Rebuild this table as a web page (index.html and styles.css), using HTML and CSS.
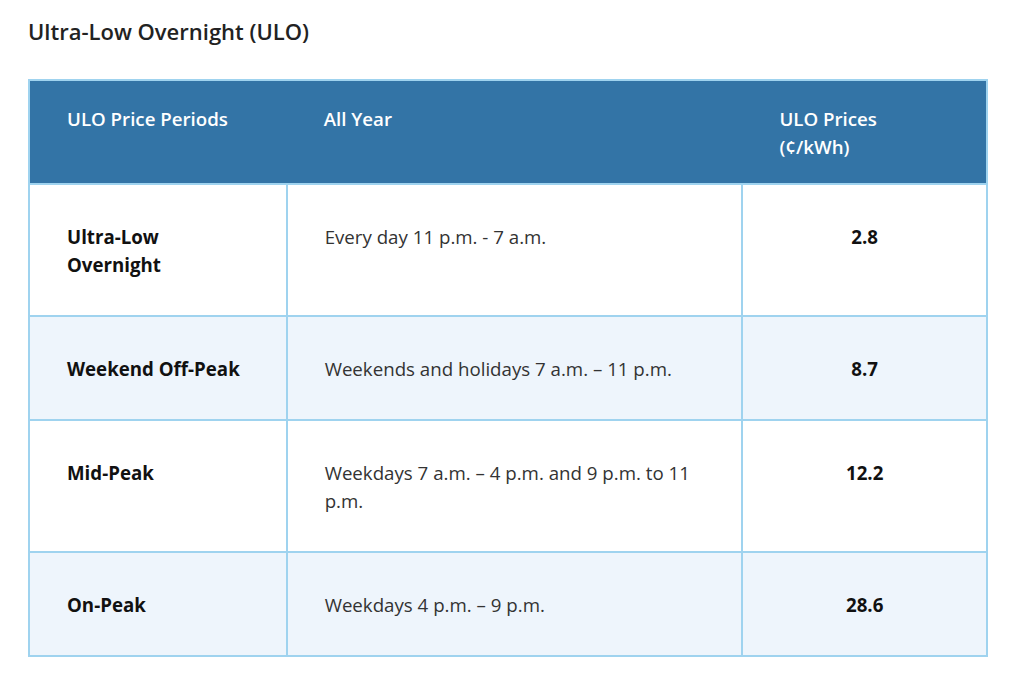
FILE: index.html
```html
<!DOCTYPE html>
<html lang="en">
<head>
<meta charset="utf-8">
<title>Ultra-Low Overnight (ULO)</title>
<link rel="stylesheet" href="styles.css">
</head>
<body>
<main class="page">
  <h2 class="title">Ultra-Low Overnight (ULO)</h2>
  <table class="rates">
    <colgroup>
      <col class="c1"><col class="c2"><col class="c3">
    </colgroup>
    <thead>
      <tr>
        <th>ULO Price Periods</th>
        <th>All Year</th>
        <th>ULO Prices<br>(¢/kWh)</th>
      </tr>
    </thead>
    <tbody>
      <tr>
        <td class="period">Ultra-Low<br>Overnight</td>
        <td>Every day 11 p.m. - 7 a.m.</td>
        <td class="price">2.8</td>
      </tr>
      <tr class="alt">
        <td class="period">Weekend Off-Peak</td>
        <td>Weekends and holidays 7 a.m. – 11 p.m.</td>
        <td class="price">8.7</td>
      </tr>
      <tr>
        <td class="period">Mid-Peak</td>
        <td>Weekdays 7 a.m. – 4 p.m. and 9 p.m. to 11 p.m.</td>
        <td class="price">12.2</td>
      </tr>
      <tr class="alt">
        <td class="period">On-Peak</td>
        <td>Weekdays 4 p.m. – 9 p.m.</td>
        <td class="price">28.6</td>
      </tr>
    </tbody>
  </table>
</main>
</body>
</html>
```

FILE: styles.css
```css
html, body {
  margin: 0;
  padding: 0;
  background: #ffffff;
}
body {
  font-family: "Open Sans", "Liberation Sans", sans-serif;
  color: #333333;
}
.page {
  padding: 17px 36px 0 28px;
}
.title {
  margin: 0 0 34px 0;
  font-size: 22px;
  line-height: 28px;
  font-weight: 600;
  color: #222222;
}
.rates {
  width: 960px;
  border-collapse: collapse;
  border: 2px solid #9fd3ef;
  font-size: 18.7px;
  line-height: 28px;
}
.c1 { width: 258px; }
.c2 { width: 457px; }
.c3 { width: 245px; }
.rates th {
  background: #3374a6;
  color: #ffffff;
  font-weight: 600;
  text-align: left;
  vertical-align: top;
  padding: 24px 37px 22px 37px;
  border: 0;
  border-bottom: 2px solid #9fd3ef;
}
.rates td {
  vertical-align: top;
  padding: 38px 37px 36px 37px;
  border: 2px solid #9fd3ef;
  color: #333333;
}
.rates tr.alt td {
  background: #eef5fc;
}
.rates td.period {
  font-weight: 700;
  color: #111111;
}
.rates td.price {
  font-weight: 700;
  color: #111111;
  text-align: center;
}
```
